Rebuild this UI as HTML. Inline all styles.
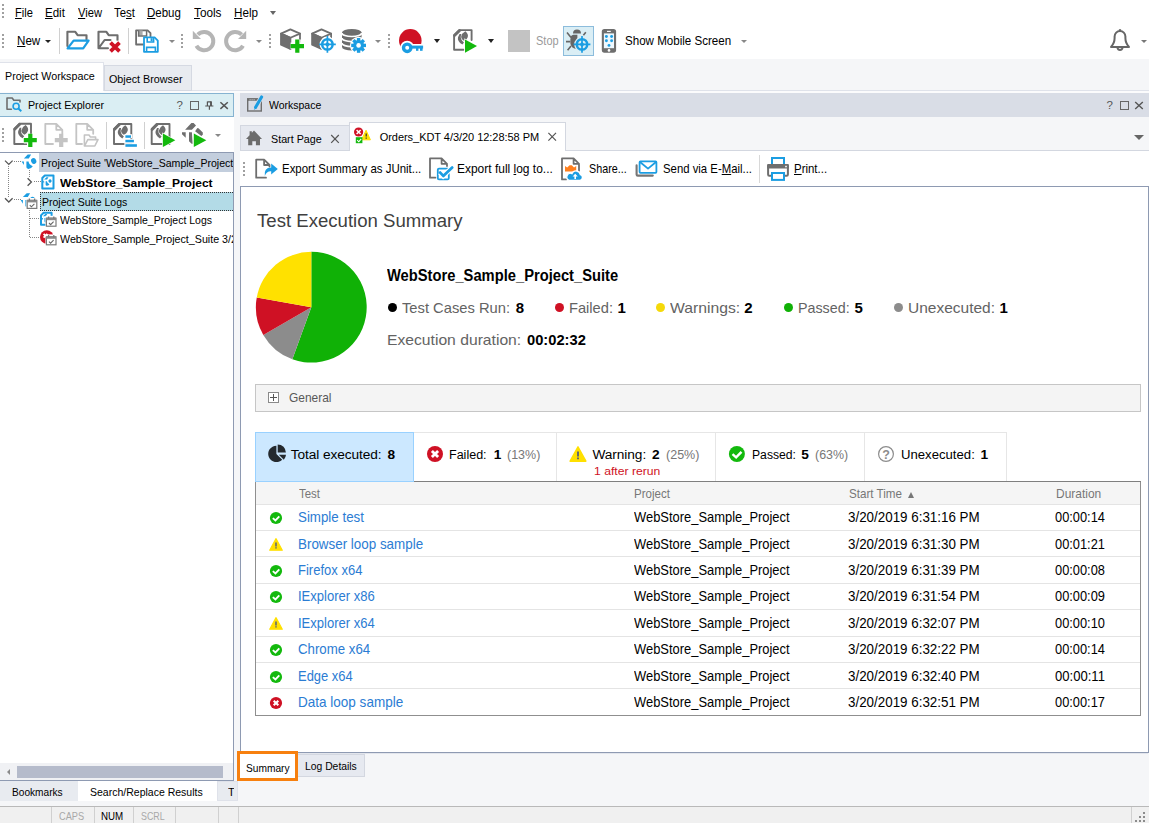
<!DOCTYPE html>
<html lang="en"><head><meta charset="utf-8"><title>TestComplete - Test Execution Summary</title>
<style>
html,body{margin:0;padding:0}
body{width:1149px;height:823px;position:relative;overflow:hidden;background:#f5f6f8;font-family:"Liberation Sans",sans-serif;color:#000}
.b{position:absolute}
.t{position:absolute;display:block;height:20px;line-height:20px;white-space:nowrap;font-family:"Liberation Sans",sans-serif}
svg{position:absolute;overflow:visible}
u{text-decoration:underline;text-underline-offset:1px}

</style></head>
<body>
<div class="b" style="left:0px;top:0px;width:1149px;height:59px;background:#fff;"></div>
<div class="b" style="left:0px;top:90px;width:1149px;height:1px;background:#dfe2ea;"></div>
<div class="b" style="left:0px;top:91px;width:1149px;height:2px;background:#fbfbfc;"></div>
<div class="b" style="left:2px;top:4px;width:2px;height:14px;background:repeating-linear-gradient(to bottom,#a0a0a0 0 2px,transparent 2px 4px)"></div>
<div class="b" style="left:2px;top:34px;width:2px;height:14px;background:repeating-linear-gradient(to bottom,#a0a0a0 0 2px,transparent 2px 4px)"></div>
<span class="t" style="left:14.8px;top:3.00px;font-size:12.7px;transform:scaleX(0.8745);transform-origin:0 0;"><u>F</u>ile</span>
<span class="t" style="left:44.9px;top:3.00px;font-size:12.7px;transform:scaleX(0.9097);transform-origin:0 0;"><u>E</u>dit</span>
<span class="t" style="left:77.5px;top:3.00px;font-size:12.7px;transform:scaleX(0.8797);transform-origin:0 0;"><u>V</u>iew</span>
<span class="t" style="left:114.0px;top:3.00px;font-size:12.7px;transform:scaleX(0.8977);transform-origin:0 0;">Te<u>s</u>t</span>
<span class="t" style="left:147.1px;top:3.00px;font-size:12.7px;transform:scaleX(0.9063);transform-origin:0 0;"><u>D</u>ebug</span>
<span class="t" style="left:194.3px;top:3.00px;font-size:12.7px;transform:scaleX(0.9283);transform-origin:0 0;"><u>T</u>ools</span>
<span class="t" style="left:234.3px;top:3.00px;font-size:12.7px;transform:scaleX(0.9192);transform-origin:0 0;"><u>H</u>elp</span>
<div class="b" style="left:269.5px;top:10.5px;width:0;height:0;border-left:3.5px solid transparent;border-right:3.5px solid transparent;border-top:4px solid #666"></div>
<span class="t" style="left:16.5px;top:31.00px;font-size:12.7px;transform:scaleX(0.9137);transform-origin:0 0;"><u>N</u>ew</span>
<div class="b" style="left:44.5px;top:40.0px;width:0;height:0;border-left:3.0px solid transparent;border-right:3.0px solid transparent;border-top:3px solid #222"></div>
<div class="b" style="left:59px;top:28px;width:1px;height:26px;background:#d0d0d0;"></div>
<div class="b" style="left:128px;top:28px;width:1px;height:26px;background:#d0d0d0;"></div>
<div class="b" style="left:168.5px;top:40.0px;width:0;height:0;border-left:3.0px solid transparent;border-right:3.0px solid transparent;border-top:3px solid #888"></div>
<div class="b" style="left:181px;top:34px;width:2px;height:14px;background:repeating-linear-gradient(to bottom,#a0a0a0 0 2px,transparent 2px 4px)"></div>
<div class="b" style="left:256.0px;top:40.0px;width:0;height:0;border-left:3.0px solid transparent;border-right:3.0px solid transparent;border-top:3px solid #888"></div>
<div class="b" style="left:269px;top:34px;width:2px;height:14px;background:repeating-linear-gradient(to bottom,#a0a0a0 0 2px,transparent 2px 4px)"></div>
<div class="b" style="left:374.5px;top:40.0px;width:0;height:0;border-left:3.0px solid transparent;border-right:3.0px solid transparent;border-top:3px solid #888"></div>
<div class="b" style="left:388px;top:34px;width:2px;height:14px;background:repeating-linear-gradient(to bottom,#a0a0a0 0 2px,transparent 2px 4px)"></div>
<div class="b" style="left:434.0px;top:39.0px;width:0;height:0;border-left:3.5px solid transparent;border-right:3.5px solid transparent;border-top:4px solid #222"></div>
<div class="b" style="left:488.0px;top:39.0px;width:0;height:0;border-left:3.5px solid transparent;border-right:3.5px solid transparent;border-top:4px solid #222"></div>
<div class="b" style="left:508px;top:30px;width:22px;height:22px;background:#c3c3c3;"></div>
<span class="t" style="left:535.6px;top:31.00px;font-size:12.7px;color:#9a9a9a;transform:scaleX(0.8656);transform-origin:0 0;">Stop</span>
<div class="b" style="left:563px;top:26px;width:31px;height:30px;background:#daeef5;border:1px solid #8cbcdc;box-sizing:border-box;"></div>
<span class="t" style="left:625.4px;top:31.00px;font-size:12.7px;transform:scaleX(0.9126);transform-origin:0 0;">Show Mobile Screen</span>
<div class="b" style="left:740.8px;top:40.0px;width:0;height:0;border-left:3.0px solid transparent;border-right:3.0px solid transparent;border-top:3px solid #888"></div>
<div class="b" style="left:1140.5px;top:40.0px;width:0;height:0;border-left:3.0px solid transparent;border-right:3.0px solid transparent;border-top:3px solid #777"></div>
<div class="b" style="left:104px;top:65px;width:88px;height:26px;background:#e8ebf0;border:1px solid #d5d9e2;box-sizing:border-box;"></div>
<div class="b" style="left:0px;top:62px;width:104px;height:30px;background:#fff;"></div>
<div class="b" style="left:0px;top:62px;width:104px;height:1px;background:#dfe2ea;"></div>
<div class="b" style="left:103px;top:62px;width:1px;height:29px;background:#dfe2ea;"></div>
<span class="t" style="left:5.2px;top:66.00px;font-size:11px;transform:scaleX(0.9738);transform-origin:0 0;">Project Workspace</span>
<span class="t" style="left:109.3px;top:69.00px;font-size:11px;transform:scaleX(0.9774);transform-origin:0 0;">Object Browser</span>
<div class="b" style="left:-1px;top:93px;width:235px;height:24px;background:#daeef3;border:1px solid #86b3d1;box-sizing:border-box;"></div>
<span class="t" style="left:27.9px;top:95.00px;font-size:11px;transform:scaleX(0.9711);transform-origin:0 0;">Project Explorer</span>
<span class="t" style="left:176.6px;top:95.00px;font-size:11.5px;color:#555;">?</span>
<div class="b" style="left:0px;top:117px;width:234px;height:36px;background:#fff;"></div>
<div class="b" style="left:0px;top:152px;width:234px;height:629px;background:#fff;border:1px solid #8e9ab2;box-sizing:border-box;border-left:none;"></div>
<div class="b" style="left:2px;top:128px;width:2px;height:14px;background:repeating-linear-gradient(to bottom,#a0a0a0 0 2px,transparent 2px 4px)"></div>
<div class="b" style="left:106px;top:122px;width:1px;height:27px;background:#d0d0d0;"></div>
<div class="b" style="left:144px;top:122px;width:1px;height:27px;background:#d0d0d0;"></div>
<div class="b" style="left:214.5px;top:134.0px;width:0;height:0;border-left:3.0px solid transparent;border-right:3.0px solid transparent;border-top:3px solid #888"></div>
<div class="b" style="left:39px;top:153px;width:194px;height:19px;background:#c3cedd;"></div>
<div class="b" style="left:40px;top:192px;width:193px;height:19px;background:#b3dbe7;border:1px dotted #333;box-sizing:border-box;border-left:1px dotted #333;border-right:none;"></div>
<div class="b" style="left:0;top:0;width:233px;height:260px;overflow:hidden">
<span class="t" style="left:40.7px;top:153.00px;font-size:11px;transform:scaleX(0.9615);transform-origin:0 0;">Project Suite 'WebStore_Sample_Project</span>
<span class="t" style="left:60.4px;top:173.00px;font-size:11px;font-weight:700;transform:scaleX(1.0916);transform-origin:0 0;">WebStore_Sample_Project</span>
<span class="t" style="left:41.7px;top:192.00px;font-size:11px;transform:scaleX(0.9554);transform-origin:0 0;">Project Suite Logs</span>
<span class="t" style="left:60.0px;top:210.00px;font-size:11px;transform:scaleX(0.9536);transform-origin:0 0;">WebStore_Sample_Project Logs</span>
<span class="t" style="left:60.0px;top:229.00px;font-size:11px;transform:scaleX(0.9724);transform-origin:0 0;">WebStore_Sample_Project_Suite 3/2</span>
</div>
<div class="b" style="left:0px;top:763px;width:233px;height:17px;background:#f0f1f4;"></div>
<div class="b" style="left:17px;top:766px;width:206px;height:12px;background:#b5bbcb;"></div>
<div class="b" style="left:7px;top:769px;width:0;height:0;border-top:3px solid transparent;border-bottom:3px solid transparent;border-right:3px solid #8a8a8a"></div>
<div class="b" style="left:0px;top:781px;width:78px;height:20px;background:#e8ebf0;"></div>
<div class="b" style="left:78px;top:781px;width:139px;height:20px;background:#fff;"></div>
<div class="b" style="left:217px;top:781px;width:21px;height:20px;background:#e8ebf0;border:1px solid #dfe2ea;box-sizing:border-box;"></div>
<span class="t" style="left:12.4px;top:782.00px;font-size:11px;transform:scaleX(0.9213);transform-origin:0 0;">Bookmarks</span>
<span class="t" style="left:89.6px;top:782.00px;font-size:11px;transform:scaleX(0.9550);transform-origin:0 0;">Search/Replace Results</span>
<span class="t" style="left:228.0px;top:782.00px;font-size:11px;width:6px;overflow:hidden;">T</span>
<div class="b" style="left:0px;top:806px;width:1149px;height:17px;background:#f0f0f0;"></div>
<div class="b" style="left:0px;top:806px;width:1149px;height:1px;background:#b9b9b9;"></div>
<div class="b" style="left:240px;top:753px;width:908px;height:1px;background:#e2e5ec;"></div>
<div class="b" style="left:51px;top:807px;width:1px;height:16px;background:#d0d0d0;"></div>
<div class="b" style="left:94px;top:807px;width:1px;height:16px;background:#d0d0d0;"></div>
<div class="b" style="left:133px;top:807px;width:1px;height:16px;background:#d0d0d0;"></div>
<div class="b" style="left:175px;top:807px;width:1px;height:16px;background:#d0d0d0;"></div>
<div class="b" style="left:218px;top:807px;width:1px;height:16px;background:#d0d0d0;"></div>
<div class="b" style="left:238px;top:807px;width:1px;height:16px;background:#d0d0d0;"></div>
<div class="b" style="left:1131px;top:807px;width:1px;height:16px;background:#d0d0d0;"></div>
<span class="t" style="left:58.7px;top:806.00px;font-size:10.5px;color:#a8a8a8;transform:scaleX(0.8778);transform-origin:0 0;">CAPS</span>
<span class="t" style="left:101.2px;top:806.00px;font-size:10.5px;transform:scaleX(0.9280);transform-origin:0 0;">NUM</span>
<span class="t" style="left:141.0px;top:806.00px;font-size:10.5px;color:#a8a8a8;transform:scaleX(0.8460);transform-origin:0 0;">SCRL</span>
<div class="b" style="left:1143px;top:812px;width:2px;height:2px;background:#8c8c8c;"></div>
<div class="b" style="left:1139px;top:816px;width:2px;height:2px;background:#8c8c8c;"></div>
<div class="b" style="left:1143px;top:816px;width:2px;height:2px;background:#8c8c8c;"></div>
<div class="b" style="left:1135px;top:820px;width:2px;height:2px;background:#8c8c8c;"></div>
<div class="b" style="left:1139px;top:820px;width:2px;height:2px;background:#8c8c8c;"></div>
<div class="b" style="left:1143px;top:820px;width:2px;height:2px;background:#8c8c8c;"></div>
<div class="b" style="left:240px;top:93px;width:909px;height:24px;background:#d9dde6;"></div>
<span class="t" style="left:268.6px;top:95.00px;font-size:11px;transform:scaleX(0.9539);transform-origin:0 0;">Workspace</span>
<span class="t" style="left:1106.6px;top:95.00px;font-size:11.5px;color:#555;">?</span>
<div class="b" style="left:240px;top:125px;width:110px;height:26px;background:#e6e9f0;border:1px solid #d3d7e0;box-sizing:border-box;"></div>
<div class="b" style="left:240px;top:150px;width:909px;height:1px;background:#d3d7e0;"></div>
<div class="b" style="left:349px;top:122px;width:217px;height:29px;background:#fff;border:1px solid #d3d7e0;box-sizing:border-box;border-bottom:none;"></div>
<span class="t" style="left:271.1px;top:129.00px;font-size:11px;transform:scaleX(0.9753);transform-origin:0 0;">Start Page</span>
<span class="t" style="left:379.7px;top:127.00px;font-size:11px;letter-spacing:-0.040px;">Orders_KDT 4/3/20 12:28:58 PM</span>
<div class="b" style="left:1134.0px;top:135.0px;width:0;height:0;border-left:5.0px solid transparent;border-right:5.0px solid transparent;border-top:5px solid #666"></div>
<div class="b" style="left:240px;top:151px;width:909px;height:35px;background:#fff;"></div>
<div class="b" style="left:243px;top:162px;width:2px;height:14px;background:repeating-linear-gradient(to bottom,#a0a0a0 0 2px,transparent 2px 4px)"></div>
<span class="t" style="left:282.2px;top:159.00px;font-size:12.7px;transform:scaleX(0.9022);transform-origin:0 0;">Export Summary as JUnit...</span>
<span class="t" style="left:457.4px;top:159.00px;font-size:12.7px;transform:scaleX(0.9433);transform-origin:0 0;">Export full <u>l</u>og to...</span>
<span class="t" style="left:588.8px;top:159.00px;font-size:12.7px;transform:scaleX(0.8484);transform-origin:0 0;">Share...</span>
<span class="t" style="left:662.7px;top:159.00px;font-size:12.7px;transform:scaleX(0.8949);transform-origin:0 0;">Send via E-<u>M</u>ail...</span>
<div class="b" style="left:759px;top:155px;width:1px;height:28px;background:#d8d8d8;"></div>
<span class="t" style="left:794.3px;top:159.00px;font-size:12.7px;transform:scaleX(0.9026);transform-origin:0 0;"><u>P</u>rint...</span>
<div class="b" style="left:240px;top:186px;width:909px;height:567px;background:#fff;border:1px solid #8e9ab2;box-sizing:border-box;"></div>
<span class="t" style="left:256.7px;top:211.00px;font-size:18.3px;color:#404040;transform:scaleX(1.0169);transform-origin:0 0;">Test Execution Summary</span>
<svg style="left:255px;top:251px" width="113" height="113" viewBox="255 251 113 113">
<path d="M311.3 307.2 L311.3 251.8 A55.4 55.4 0 1 1 292.35 359.26 Z" fill="#10b106"/>
<path d="M311.3 307.2 L292.35 359.26 A55.4 55.4 0 0 1 263.32 334.9 Z" fill="#8c8c8c"/>
<path d="M311.3 307.2 L263.32 334.9 A55.4 55.4 0 0 1 256.74 297.58 Z" fill="#cf1124"/>
<path d="M311.3 307.2 L256.74 297.58 A55.4 55.4 0 0 1 311.3 251.8 Z" fill="#ffe100"/>
</svg>
<span class="t" style="left:387.0px;top:266.00px;font-size:15.6px;font-weight:700;transform:scaleX(0.9437);transform-origin:0 0;">WebStore_Sample_Project_Suite</span>
<div class="b" style="left:388.0px;top:302.9px;width:9px;height:9px;border-radius:50%;background:#000"></div>
<span class="t" style="left:402.3px;top:298.00px;font-size:15px;color:#636363;transform:scaleX(0.9823);transform-origin:0 0;">Test Cases Run:</span>
<span class="t" style="left:515.7px;top:298.00px;font-size:15px;font-weight:700;">8</span>
<div class="b" style="left:555.2px;top:302.9px;width:9px;height:9px;border-radius:50%;background:#cf1124"></div>
<span class="t" style="left:569.4px;top:298.00px;font-size:15px;color:#636363;transform:scaleX(0.9771);transform-origin:0 0;">Failed:</span>
<span class="t" style="left:617.6px;top:298.00px;font-size:15px;font-weight:700;">1</span>
<div class="b" style="left:655.7px;top:302.9px;width:9px;height:9px;border-radius:50%;background:#f5d90a"></div>
<span class="t" style="left:669.8px;top:298.00px;font-size:15px;color:#636363;transform:scaleX(1.0483);transform-origin:0 0;">Warnings:</span>
<span class="t" style="left:744.2px;top:298.00px;font-size:15px;font-weight:700;">2</span>
<div class="b" style="left:784.2px;top:302.9px;width:9px;height:9px;border-radius:50%;background:#10b106"></div>
<span class="t" style="left:798.4px;top:298.00px;font-size:15px;color:#636363;transform:scaleX(0.9520);transform-origin:0 0;">Passed:</span>
<span class="t" style="left:854.4px;top:298.00px;font-size:15px;font-weight:700;">5</span>
<div class="b" style="left:893.8px;top:302.9px;width:9px;height:9px;border-radius:50%;background:#8c8c8c"></div>
<span class="t" style="left:908.0px;top:298.00px;font-size:15px;color:#636363;transform:scaleX(1.0328);transform-origin:0 0;">Unexecuted:</span>
<span class="t" style="left:999.6px;top:298.00px;font-size:15px;font-weight:700;">1</span>
<span class="t" style="left:387.3px;top:330.00px;font-size:15px;color:#636363;transform:scaleX(1.0450);transform-origin:0 0;">Execution duration:</span>
<span class="t" style="left:526.8px;top:330.00px;font-size:15px;font-weight:700;transform:scaleX(0.9792);transform-origin:0 0;">00:02:32</span>
<div class="b" style="left:255px;top:384px;width:886px;height:28px;background:#f4f4f4;border:1px solid #c6c6c6;box-sizing:border-box;"></div>
<div class="b" style="left:268px;top:392px;width:11px;height:11px;background:#fff;border:1px solid #8a8a8a;box-sizing:border-box;"></div>
<div class="b" style="left:270px;top:397px;width:7px;height:1px;background:#555;"></div>
<div class="b" style="left:273px;top:394px;width:1px;height:7px;background:#555;"></div>
<span class="t" style="left:288.5px;top:388.00px;font-size:13.3px;color:#585858;transform:scaleX(0.8983);transform-origin:0 0;">General</span>
<div class="b" style="left:255px;top:432px;width:752px;height:1px;background:#e6e6e6;"></div>
<div class="b" style="left:556px;top:433px;width:1px;height:49px;background:#e6e6e6;"></div>
<div class="b" style="left:715px;top:433px;width:1px;height:49px;background:#e6e6e6;"></div>
<div class="b" style="left:864px;top:433px;width:1px;height:49px;background:#e6e6e6;"></div>
<div class="b" style="left:1006px;top:433px;width:1px;height:49px;background:#e6e6e6;"></div>
<div class="b" style="left:255px;top:481px;width:886px;height:1px;background:#7f7f7f;"></div>
<div class="b" style="left:255px;top:432px;width:159px;height:50px;background:#cce8ff;border:1px solid #99d1ff;box-sizing:border-box;"></div>
<span class="t" style="left:290.7px;top:445.00px;font-size:13.7px;letter-spacing:-0.084px;">Total executed:</span>
<span class="t" style="left:387.5px;top:445.00px;font-size:13.7px;font-weight:700;">8</span>
<span class="t" style="left:449.0px;top:445.00px;font-size:13.7px;transform:scaleX(0.9150);transform-origin:0 0;">Failed:</span>
<span class="t" style="left:493.8px;top:445.00px;font-size:13.7px;font-weight:700;">1</span>
<span class="t" style="left:506.7px;top:445.00px;font-size:13.7px;color:#777;transform:scaleX(0.9119);transform-origin:0 0;">(13%)</span>
<span class="t" style="left:592.5px;top:445.00px;font-size:13.7px;letter-spacing:-0.081px;">Warning:</span>
<span class="t" style="left:652.0px;top:445.00px;font-size:13.7px;font-weight:700;">2</span>
<span class="t" style="left:665.7px;top:445.00px;font-size:13.7px;color:#777;transform:scaleX(0.9147);transform-origin:0 0;">(25%)</span>
<span class="t" style="left:593.6px;top:461.00px;font-size:11.6px;color:#cf1124;transform:scaleX(1.0498);transform-origin:0 0;">1 after rerun</span>
<span class="t" style="left:751.5px;top:445.00px;font-size:13.7px;transform:scaleX(0.8895);transform-origin:0 0;">Passed:</span>
<span class="t" style="left:801.3px;top:445.00px;font-size:13.7px;font-weight:700;">5</span>
<span class="t" style="left:815.0px;top:445.00px;font-size:13.7px;color:#777;transform:scaleX(0.9092);transform-origin:0 0;">(63%)</span>
<span class="t" style="left:900.6px;top:445.00px;font-size:13.7px;transform:scaleX(0.9602);transform-origin:0 0;">Unexecuted:</span>
<span class="t" style="left:980.6px;top:445.00px;font-size:13.7px;font-weight:700;">1</span>
<div class="b" style="left:255px;top:482px;width:886px;height:234px;background:#fff;border:1px solid #8f8f8f;box-sizing:border-box;border-top:none;"></div>
<div class="b" style="left:256px;top:482px;width:884px;height:22px;background:#f5f5f5;"></div>
<span class="t" style="left:299.0px;top:484.00px;font-size:12.6px;color:#777;transform:scaleX(0.9087);transform-origin:0 0;">Test</span>
<span class="t" style="left:634.1px;top:484.00px;font-size:12.6px;color:#777;transform:scaleX(0.9157);transform-origin:0 0;">Project</span>
<span class="t" style="left:848.9px;top:484.00px;font-size:12.6px;color:#777;transform:scaleX(0.9235);transform-origin:0 0;">Start Time</span>
<div class="b" style="left:908px;top:491.5px;width:0;height:0;border-left:3.7px solid transparent;border-right:3.7px solid transparent;border-bottom:6px solid #777"></div>
<span class="t" style="left:1055.7px;top:484.00px;font-size:12.6px;color:#777;transform:scaleX(0.9494);transform-origin:0 0;">Duration</span>
<div class="b" style="left:256px;top:504px;width:884px;height:1px;background:#e4e4e4;"></div>
<span class="t" style="left:298.3px;top:507.00px;font-size:14.3px;color:#2b7cd3;transform:scaleX(0.9319);transform-origin:0 0;">Simple test</span>
<span class="t" style="left:634.1px;top:507.00px;font-size:14.3px;transform:scaleX(0.9037);transform-origin:0 0;">WebStore_Sample_Project</span>
<span class="t" style="left:848.2px;top:507.00px;font-size:14.3px;transform:scaleX(0.9360);transform-origin:0 0;">3/20/2019 6:31:16 PM</span>
<span class="t" style="left:1055.0px;top:507.00px;font-size:14.3px;transform:scaleX(0.8966);transform-origin:0 0;">00:00:14</span>
<!--icon p 0-->
<div class="b" style="left:256px;top:530px;width:884px;height:1px;background:#e4e4e4;"></div>
<span class="t" style="left:298.3px;top:534.00px;font-size:14.3px;color:#2b7cd3;transform:scaleX(0.9371);transform-origin:0 0;">Browser loop sample</span>
<span class="t" style="left:634.1px;top:534.00px;font-size:14.3px;transform:scaleX(0.9037);transform-origin:0 0;">WebStore_Sample_Project</span>
<span class="t" style="left:848.2px;top:534.00px;font-size:14.3px;transform:scaleX(0.9360);transform-origin:0 0;">3/20/2019 6:31:30 PM</span>
<span class="t" style="left:1055.0px;top:534.00px;font-size:14.3px;transform:scaleX(0.8966);transform-origin:0 0;">00:01:21</span>
<!--icon w 1-->
<div class="b" style="left:256px;top:556px;width:884px;height:1px;background:#e4e4e4;"></div>
<span class="t" style="left:298.3px;top:560.00px;font-size:14.3px;color:#2b7cd3;transform:scaleX(0.9106);transform-origin:0 0;">Firefox x64</span>
<span class="t" style="left:634.1px;top:560.00px;font-size:14.3px;transform:scaleX(0.9037);transform-origin:0 0;">WebStore_Sample_Project</span>
<span class="t" style="left:848.2px;top:560.00px;font-size:14.3px;transform:scaleX(0.9360);transform-origin:0 0;">3/20/2019 6:31:39 PM</span>
<span class="t" style="left:1055.0px;top:560.00px;font-size:14.3px;transform:scaleX(0.8966);transform-origin:0 0;">00:00:08</span>
<!--icon p 2-->
<div class="b" style="left:256px;top:583px;width:884px;height:1px;background:#e4e4e4;"></div>
<span class="t" style="left:298.3px;top:586.00px;font-size:14.3px;color:#2b7cd3;transform:scaleX(0.9117);transform-origin:0 0;">IExplorer x86</span>
<span class="t" style="left:634.1px;top:586.00px;font-size:14.3px;transform:scaleX(0.9037);transform-origin:0 0;">WebStore_Sample_Project</span>
<span class="t" style="left:848.2px;top:586.00px;font-size:14.3px;transform:scaleX(0.9360);transform-origin:0 0;">3/20/2019 6:31:54 PM</span>
<span class="t" style="left:1055.0px;top:586.00px;font-size:14.3px;transform:scaleX(0.8966);transform-origin:0 0;">00:00:09</span>
<!--icon p 3-->
<div class="b" style="left:256px;top:609px;width:884px;height:1px;background:#e4e4e4;"></div>
<span class="t" style="left:298.3px;top:613.00px;font-size:14.3px;color:#2b7cd3;transform:scaleX(0.9117);transform-origin:0 0;">IExplorer x64</span>
<span class="t" style="left:634.1px;top:613.00px;font-size:14.3px;transform:scaleX(0.9037);transform-origin:0 0;">WebStore_Sample_Project</span>
<span class="t" style="left:848.2px;top:613.00px;font-size:14.3px;transform:scaleX(0.9360);transform-origin:0 0;">3/20/2019 6:32:07 PM</span>
<span class="t" style="left:1055.0px;top:613.00px;font-size:14.3px;transform:scaleX(0.8966);transform-origin:0 0;">00:00:10</span>
<!--icon w 4-->
<div class="b" style="left:256px;top:636px;width:884px;height:1px;background:#e4e4e4;"></div>
<span class="t" style="left:298.3px;top:639.00px;font-size:14.3px;color:#2b7cd3;transform:scaleX(0.9271);transform-origin:0 0;">Chrome x64</span>
<span class="t" style="left:634.1px;top:639.00px;font-size:14.3px;transform:scaleX(0.9037);transform-origin:0 0;">WebStore_Sample_Project</span>
<span class="t" style="left:848.2px;top:639.00px;font-size:14.3px;transform:scaleX(0.9360);transform-origin:0 0;">3/20/2019 6:32:22 PM</span>
<span class="t" style="left:1055.0px;top:639.00px;font-size:14.3px;transform:scaleX(0.8966);transform-origin:0 0;">00:00:14</span>
<!--icon p 5-->
<div class="b" style="left:256px;top:662px;width:884px;height:1px;background:#e4e4e4;"></div>
<span class="t" style="left:298.3px;top:666.00px;font-size:14.3px;color:#2b7cd3;transform:scaleX(0.9053);transform-origin:0 0;">Edge x64</span>
<span class="t" style="left:634.1px;top:666.00px;font-size:14.3px;transform:scaleX(0.9037);transform-origin:0 0;">WebStore_Sample_Project</span>
<span class="t" style="left:848.2px;top:666.00px;font-size:14.3px;transform:scaleX(0.9360);transform-origin:0 0;">3/20/2019 6:32:40 PM</span>
<span class="t" style="left:1055.0px;top:666.00px;font-size:14.3px;transform:scaleX(0.9140);transform-origin:0 0;">00:00:11</span>
<!--icon p 6-->
<div class="b" style="left:256px;top:688px;width:884px;height:1px;background:#e4e4e4;"></div>
<span class="t" style="left:298.3px;top:692.00px;font-size:14.3px;color:#2b7cd3;transform:scaleX(0.9455);transform-origin:0 0;">Data loop sample</span>
<span class="t" style="left:634.1px;top:692.00px;font-size:14.3px;transform:scaleX(0.9037);transform-origin:0 0;">WebStore_Sample_Project</span>
<span class="t" style="left:848.2px;top:692.00px;font-size:14.3px;transform:scaleX(0.9360);transform-origin:0 0;">3/20/2019 6:32:51 PM</span>
<span class="t" style="left:1055.0px;top:692.00px;font-size:14.3px;transform:scaleX(0.8966);transform-origin:0 0;">00:00:17</span>
<!--icon f 7-->
<div class="b" style="left:297px;top:754px;width:68px;height:23px;background:#e6e9f0;border:1px solid #d3d7e0;box-sizing:border-box;"></div>
<div class="b" style="left:237px;top:751px;width:61px;height:30px;background:#fff;border:3px solid #f7800f;box-sizing:border-box;"></div>
<span class="t" style="left:246.4px;top:758.00px;font-size:11px;transform:scaleX(0.9264);transform-origin:0 0;">Summary</span>
<span class="t" style="left:304.5px;top:756.00px;font-size:11px;transform:scaleX(0.9410);transform-origin:0 0;">Log Details</span>
<svg style="left:0;top:0" width="1149" height="823" viewBox="0 0 1149 823">
<path d="M67.4 46 V31.8 H75.3 L77.6 35.2 H86.5 V39.5" fill="none" stroke="#6e6e6e" stroke-width="2.1" stroke-linejoin="round" stroke-linecap="round"/>
<path d="M73.6 40.6 H88.6 L83.2 48.4 H67.6 Z" fill="#fff" stroke="#1b9de2" stroke-width="2.2" stroke-linejoin="round" stroke-linecap="round"/>
<path d="M98.5 48 V31.8 H106.4 L108.7 35.2 H117.5 V40 M98.8 48 L104.6 40 H110.5 M98.5 48.2 H108" fill="none" stroke="#6e6e6e" stroke-width="2.1" stroke-linejoin="round" stroke-linecap="round"/>
<path d="M110.5 42.7 L119.5 51.3 M119.5 42.7 L110.5 51.3" fill="none" stroke="#fff" stroke-width="6" />
<path d="M110.5 42.7 L119.5 51.3 M119.5 42.7 L110.5 51.3" fill="none" stroke="#cf1124" stroke-width="3.8" />
<path d="M136.1 44.5 V30.3 H147.6 L150.5 33.2 V36.5 M136.1 44.5 H143" fill="none" stroke="#6e6e6e" stroke-width="1.8" stroke-linejoin="round" stroke-linecap="round"/>
<rect x="138.6" y="30.4" width="4" height="5.2" fill="#a9a9a9"/>
<path d="M138.6 30.5 V36 H146.6 V30.5" fill="none" stroke="#6e6e6e" stroke-width="1.5" />
<path d="M144 37.4 H154.6 L157.8 40.6 V51.8 H144 Z" fill="#fff" stroke="#1b9de2" stroke-width="1.8" stroke-linejoin="round" stroke-linecap="round"/>
<path d="M147.2 37.4 V42 H153.6 V37.4 M146.6 51.8 V47.4 H155.4 V51.8" fill="none" stroke="#1b9de2" stroke-width="1.6" />
<rect x="150.6" y="38.2" width="2" height="3" fill="#1b9de2"/>
<path d="M197.8 34.7 A9.1 9.1 0 1 1 196.4 45.8" fill="none" stroke="#b5b5b5" stroke-width="4" />
<path d="M192.8 30.8 V39 H201 Z" fill="#b5b5b5" />
<path d="M241.6 34.7 A9.1 9.1 0 1 0 243 45.8" fill="none" stroke="#b5b5b5" stroke-width="4" />
<path d="M246.2 30.8 V39 H238 Z" fill="#b5b5b5" />
<path d="M281.0 33.6 L290.4 29.4 L300.0 33.6 L290.4 37.8 Z" fill="#fff" stroke="#6e6e6e" stroke-width="1.8" stroke-linejoin="round" stroke-linecap="round"/>
<path d="M281.0 33.6 L290.4 37.8 L290.4 49 L281.0 44.8 Z" fill="#6e6e6e" stroke="#6e6e6e" stroke-width="1.8" stroke-linejoin="round" stroke-linecap="round"/>
<path d="M300.0 33.6 V44.8 L290.4 49" fill="none" stroke="#6e6e6e" stroke-width="1.8" stroke-linejoin="round" stroke-linecap="round"/>
<path d="M290.6 46.1 H304 M297.3 39.6 V52.8" fill="none" stroke="#fff" stroke-width="7" />
<path d="M290.6 46.1 H304 M297.3 39.6 V52.8" fill="none" stroke="#13b90d" stroke-width="4.2" />
<path d="M312.1 33.6 L321.5 29.4 L331.1 33.6 L321.5 37.8 Z" fill="#fff" stroke="#6e6e6e" stroke-width="1.8" stroke-linejoin="round" stroke-linecap="round"/>
<path d="M312.1 33.6 L321.5 37.8 L321.5 49 L312.1 44.8 Z" fill="#6e6e6e" stroke="#6e6e6e" stroke-width="1.8" stroke-linejoin="round" stroke-linecap="round"/>
<path d="M331.1 33.6 V44.8 L321.5 49" fill="none" stroke="#6e6e6e" stroke-width="1.8" stroke-linejoin="round" stroke-linecap="round"/>
<circle cx="327.4" cy="44.4" r="7.8" fill="#fff"/>
<circle cx="327.4" cy="44.4" r="5.2" fill="none" stroke="#1b9de2" stroke-width="2.5"/>
<path d="M327.4 36.0 V52.8 M319.0 44.4 H335.79999999999995" fill="none" stroke="#1b9de2" stroke-width="1.7" />
<path d="M327.4 41.8 L330.0 44.4 L327.4 47.0 L324.79999999999995 44.4 Z" fill="#1b9de2" />
<path d="M342 32.6 V47 A9.8 3.6 0 0 0 361.6 47 V32.6 Z" fill="#6e6e6e" />
<ellipse cx="351.8" cy="32.6" rx="9.8" ry="3.6" fill="#6e6e6e"/>
<path d="M342 32.9 A9.8 3.6 0 0 0 361.6 32.9" fill="none" stroke="#fff" stroke-width="1.7" />
<path d="M342 38 A9.8 3.6 0 0 0 361.6 38" fill="none" stroke="#fff" stroke-width="1.7" />
<path d="M342 43.1 A9.8 3.6 0 0 0 361.6 43.1" fill="none" stroke="#fff" stroke-width="1.7" />
<circle cx="358.6" cy="45.4" r="8.6" fill="#fff"/>
<rect x="356.90000000000003" y="38.0" width="3.4" height="4" fill="#1b9de2" transform="rotate(0 358.6 45.4)"/>
<rect x="356.90000000000003" y="38.0" width="3.4" height="4" fill="#1b9de2" transform="rotate(45 358.6 45.4)"/>
<rect x="356.90000000000003" y="38.0" width="3.4" height="4" fill="#1b9de2" transform="rotate(90 358.6 45.4)"/>
<rect x="356.90000000000003" y="38.0" width="3.4" height="4" fill="#1b9de2" transform="rotate(135 358.6 45.4)"/>
<rect x="356.90000000000003" y="38.0" width="3.4" height="4" fill="#1b9de2" transform="rotate(180 358.6 45.4)"/>
<rect x="356.90000000000003" y="38.0" width="3.4" height="4" fill="#1b9de2" transform="rotate(225 358.6 45.4)"/>
<rect x="356.90000000000003" y="38.0" width="3.4" height="4" fill="#1b9de2" transform="rotate(270 358.6 45.4)"/>
<rect x="356.90000000000003" y="38.0" width="3.4" height="4" fill="#1b9de2" transform="rotate(315 358.6 45.4)"/>
<circle cx="358.6" cy="45.4" r="5.4" fill="#1b9de2"/>
<circle cx="358.6" cy="45.4" r="2.3" fill="#fff"/>
<circle cx="410.3" cy="40.4" r="11.3" fill="#cf1124"/>
<circle cx="407.2" cy="47.8" r="7" fill="#fff"/>
<rect x="410" y="44" width="14.2" height="8.4" fill="#fff"/>
<circle cx="407.2" cy="47.8" r="3.7" fill="none" stroke="#1b9de2" stroke-width="3.4"/>
<rect x="411.5" y="45.6" width="11.6" height="3" fill="#1b9de2"/>
<rect x="416" y="48" width="2.4" height="2.8" fill="#1b9de2"/>
<rect x="420" y="48" width="2.6" height="2.8" fill="#1b9de2"/>
<path d="M459.2 30.1 H471.6 V40 M459.2 30.1 L454.1 35.2 V49.7 H463.5" fill="none" stroke="#6e6e6e" stroke-width="1.9" stroke-linejoin="round" stroke-linecap="round"/>
<path d="M454.5 35.6 L459.6 30.5" fill="none" stroke="#6e6e6e" stroke-width="2.8" stroke-linecap="round"/>
<path d="M465.4 31.3 Q468.8 34.2 467.7 37.2 Q466.59999999999997 40.2 464.3 41.1 Q461.0 39.2 461.2 36.5 Q461.8 33.2 465.4 31.3 Z M459.5 34.1 L461.2 34.1 Q459.59999999999997 39.8 464.0 42.5 L462.4 44.6 Q457.0 41.2 458.0 37.2 Z" fill="#6e6e6e" />
<path d="M465 39.4 V52.8 L477 46.1 Z" fill="#13b90d" stroke="#fff" stroke-width="1.4" />
<path d="M465 39.4 V52.8 L477 46.1 Z" fill="#13b90d" />
<path d="M573 33.6 a4 4 0 0 1 8 0 z" fill="#666" />
<path d="M577.4 34.8 h-4 q-3 0.4 -3 4.4 v4 q0 5 7 5.8 z" fill="#666" />
<path d="M571 37.4 L567 32.6 M570.4 41.6 H566 M571 46 L567.6 50.2 M583.4 35.2 L585.8 32.2" fill="none" stroke="#666" stroke-width="1.6" />
<circle cx="582" cy="44.4" r="7.8" fill="#daeef5"/>
<circle cx="582" cy="44.4" r="5.2" fill="none" stroke="#1b9de2" stroke-width="2.5"/>
<path d="M582 36.0 V52.8 M573.6 44.4 H590.4" fill="none" stroke="#1b9de2" stroke-width="1.7" />
<path d="M582 41.8 L584.6 44.4 L582 47.0 L579.4 44.4 Z" fill="#1b9de2" />
<rect x="601.8" y="29" width="14.3" height="23.7" fill="#6e6e6e" rx="2.6"/>
<rect x="603.9" y="33.4" width="10.1" height="14.8" fill="#eef8fe"/>
<circle cx="606.4" cy="36.5" r="1.45" fill="#1b9de2"/>
<circle cx="611.6" cy="36.5" r="1.45" fill="#1b9de2"/>
<circle cx="606.4" cy="40.8" r="1.45" fill="#1b9de2"/>
<circle cx="611.6" cy="40.8" r="1.45" fill="#1b9de2"/>
<circle cx="609" cy="45.4" r="1.45" fill="#1b9de2"/>
<path d="M607 31.4 H610.8" fill="none" stroke="#fff" stroke-width="1.1" />
<circle cx="609" cy="50.4" r="1.3" fill="#fff"/>
<path d="M1111 46.9 H1129 M1111.2 46.6 Q1114.6 43 1114.6 38 V36.6 A5.4 5.6 0 0 1 1125.4 36.6 V38 Q1125.4 43 1128.8 46.6" fill="none" stroke="#666" stroke-width="2" stroke-linejoin="round" stroke-linecap="round"/>
<path d="M1120 29.2 V31" fill="none" stroke="#666" stroke-width="2.2" />
<path d="M1117.4 47.8 A2.7 3 0 0 0 1122.6 47.8" fill="none" stroke="#666" stroke-width="1.9" />
<path d="M7 109.2 V98 H12.2 L13.8 100.2 H20 V102 M7 109.2 H11.4" fill="none" stroke="#6e6e6e" stroke-width="1.6" stroke-linejoin="round" stroke-linecap="round"/>
<circle cx="16.1" cy="106.2" r="3" fill="#daeef3" stroke="#1b9de2" stroke-width="1.6"/>
<path d="M18.4 108.5 L21.3 111.3" fill="none" stroke="#1b9de2" stroke-width="1.9" />
<rect x="190.5" y="101.5" width="8" height="8" fill="none" stroke="#666" stroke-width="1"/>
<path d="M205.2 106 H213.4 M207.4 101.6 V106 M207.4 101.8 H211.4 M209.4 106 V109.8" fill="none" stroke="#555" stroke-width="1.2" />
<path d="M211 101.4 V106" fill="none" stroke="#555" stroke-width="1.9" />
<path d="M220.4 102.2 L227.8 108.9 M227.8 102.2 L220.4 108.9" fill="none" stroke="#555" stroke-width="1.5" />
<path d="M14.3 128.8 L19.3 123.8 H31 V144 H14.3 Z" fill="none" stroke="#6e6e6e" stroke-width="1.9" stroke-linejoin="round" stroke-linecap="round"/>
<path d="M14.700000000000001 129.20000000000002 L19.7 124.2" fill="none" stroke="#6e6e6e" stroke-width="2.8" stroke-linecap="round"/>
<path d="M25.6 125.0 Q29.0 127.9 27.9 130.9 Q26.8 133.9 24.5 134.8 Q21.2 132.9 21.4 130.20000000000002 Q22.0 126.9 25.6 125.0 Z M19.7 127.80000000000001 L21.4 127.80000000000001 Q19.8 133.5 24.200000000000003 136.20000000000002 L22.6 138.3 Q17.2 134.9 18.2 130.9 Z" fill="#6e6e6e" />
<path d="M23.8 140.2 H36.8 M30.3 133.8 V147" fill="none" stroke="#fff" stroke-width="6.6" />
<path d="M23.8 140.2 H36.8 M30.3 133.8 V147" fill="none" stroke="#13b90d" stroke-width="4.2" />
<path d="M53 144 H45.3 V123.8 H56.3 L62.3 129.8 V133.8 M56.3 123.8 V129.8 H62.3" fill="none" stroke="#c4c4c4" stroke-width="1.8" stroke-linejoin="round" stroke-linecap="round"/>
<path d="M54.8 140.2 H67.7 M61.2 133.8 V147" fill="none" stroke="#c4c4c4" stroke-width="4.2" />
<path d="M82 144 H76.3 V123.8 H87.2 L93.2 129.8 V133.8 M87.2 123.8 V129.8 H93.2" fill="none" stroke="#c4c4c4" stroke-width="1.8" stroke-linejoin="round" stroke-linecap="round"/>
<path d="M84.4 146 V135 H89 L90.4 137 H95.6 V139 M84.6 146 L87.8 139.6 H98 L94.8 146 Z" fill="#fff" stroke="#c4c4c4" stroke-width="1.6" stroke-linejoin="round" stroke-linecap="round"/>
<path d="M114 129 L119 124 H131.3 V144 H114 Z" fill="none" stroke="#6e6e6e" stroke-width="1.9" stroke-linejoin="round" stroke-linecap="round"/>
<path d="M114.4 129.4 L119.4 124.4" fill="none" stroke="#6e6e6e" stroke-width="2.8" stroke-linecap="round"/>
<path d="M125.3 125.19999999999999 Q128.7 128.1 127.6 131.1 Q126.5 134.1 124.19999999999999 135.0 Q120.89999999999999 133.1 121.1 130.4 Q121.69999999999999 127.1 125.3 125.19999999999999 Z M119.39999999999999 128.0 L121.1 128.0 Q119.5 133.7 123.89999999999999 136.4 L122.3 138.5 Q116.89999999999999 135.1 117.89999999999999 131.1 Z" fill="#6e6e6e" />
<rect x="124.4" y="134.2" width="7.6" height="4" fill="#fff"/>
<rect x="124.4" y="138.8" width="10.5" height="4.6" fill="#fff"/>
<rect x="124.4" y="143.2" width="13.5" height="4.6" fill="#fff"/>
<rect x="125.4" y="135.3" width="5.6" height="2.5" fill="#1b9de2"/>
<rect x="125.4" y="139.8" width="8.5" height="2.5" fill="#1b9de2"/>
<rect x="125.4" y="144.2" width="11.5" height="2.6" fill="#1b9de2"/>
<path d="M151.7 129 L156.7 124 H169.5 V144 H151.7 Z" fill="none" stroke="#6e6e6e" stroke-width="1.9" stroke-linejoin="round" stroke-linecap="round"/>
<path d="M152.1 129.4 L157.1 124.4" fill="none" stroke="#6e6e6e" stroke-width="2.8" stroke-linecap="round"/>
<path d="M163.0 125.19999999999999 Q166.4 128.1 165.3 131.1 Q164.20000000000002 134.1 161.9 135.0 Q158.60000000000002 133.1 158.8 130.4 Q159.4 127.1 163.0 125.19999999999999 Z M157.10000000000002 128.0 L158.8 128.0 Q157.20000000000002 133.7 161.60000000000002 136.4 L160.0 138.5 Q154.60000000000002 135.1 155.60000000000002 131.1 Z" fill="#6e6e6e" />
<path d="M162.9 133.6 V147.1 L175.3 140.3 Z" fill="#13b90d" stroke="#fff" stroke-width="1.4" />
<path d="M162.9 133.6 V147.1 L175.3 140.3 Z" fill="#13b90d" />
<path d="M185.1 129.7 L191.4 123.1 H193.6 L196 125.39999999999999 L191.9 129.7 Z M182 132.2 H185.7 V137.79999999999998 L182 134.29999999999998 Z M189 132.2 H191.9 L192.6 143.7 H191.6 L189 141.29999999999998 Z M195.1 131.2 L197.2 128.29999999999998 Q198 127.69999999999999 199 128.7 L202.8 132.4 V134.7 L201.3 135.9 Z" fill="#6e6e6e" />
<path d="M193.8 133.6 V147.1 L206.3 140.3 Z" fill="#13b90d" stroke="#fff" stroke-width="1.4" />
<path d="M193.8 133.6 V147.1 L206.3 140.3 Z" fill="#13b90d" />
<path d="M5 160.6 L8.8 164.4 L12.6 160.6" fill="none" stroke="#555" stroke-width="1.3" />
<path d="M5 198.2 L8.8 202 L12.6 198.2" fill="none" stroke="#555" stroke-width="1.3" />
<path d="M27.6 178.2 L31.4 182 L27.6 185.8" fill="none" stroke="#555" stroke-width="1.3" />
<path d="M8.5 166 V198" fill="none" stroke="#858585" stroke-width="1" stroke-dasharray="1 1"/>
<path d="M14 161.5 H22" fill="none" stroke="#858585" stroke-width="1" stroke-dasharray="1 1"/>
<path d="M14 199.5 H22" fill="none" stroke="#858585" stroke-width="1" stroke-dasharray="1 1"/>
<path d="M29.5 170 V177" fill="none" stroke="#858585" stroke-width="1" stroke-dasharray="1 1"/>
<path d="M34 181.5 H41" fill="none" stroke="#858585" stroke-width="1" stroke-dasharray="1 1"/>
<path d="M29.5 210 V238" fill="none" stroke="#858585" stroke-width="1" stroke-dasharray="1 1"/>
<path d="M30 218.5 H40" fill="none" stroke="#858585" stroke-width="1" stroke-dasharray="1 1"/>
<path d="M30 237.5 H40" fill="none" stroke="#858585" stroke-width="1" stroke-dasharray="1 1"/>
<path d="M23.9 158.4 L27.7 154.6 L31.1 154.6 L28.8 158.4 Z M21.6 161.5 L23.9 161.5 L23.9 165.1 Z M26.4 161.5 L28.6 161.5 Q28.8 164.6 32.8 166.3 Q31.0 169.0 28.4 169.1 Q26.4 168.4 26.4 167.2 Z" fill="#1b9de2" />
<ellipse cx="33.7" cy="161.0" rx="2.6" ry="2.9" fill="#1b9de2" transform="rotate(-25 33.7 161.0)"/>
<path d="M42.3 178 L44.8 175.5 H53.5 V188.6 H42.3 Z" fill="#fff" stroke="#1b9de2" stroke-width="2" stroke-linejoin="round" stroke-linecap="round"/>
<path d="M44.14 179.44 L46.42 177.16 L48.46 177.16 L47.080000000000005 179.44 Z M42.760000000000005 181.29999999999998 L44.14 181.29999999999998 L44.14 183.46 Z M45.64 181.29999999999998 L46.96 181.29999999999998 Q47.080000000000005 183.16 49.480000000000004 184.18 Q48.400000000000006 185.79999999999998 46.84 185.85999999999999 Q45.64 185.44 45.64 184.72 Z" fill="#1b9de2" />
<ellipse cx="50.02" cy="181.0" rx="1.56" ry="1.74" fill="#1b9de2" transform="rotate(-25 50.02 181.0)"/>
<path d="M22.9 197.0 L26.7 193.2 L30.1 193.2 L27.8 197.0 Z M20.6 200.1 L22.9 200.1 L22.9 203.7 Z M25.4 200.1 L27.6 200.1 Q27.8 203.2 31.8 204.9 Q30.0 207.6 27.4 207.7 Q25.4 207.0 25.4 205.79999999999998 Z" fill="#1b9de2" />
<ellipse cx="32.7" cy="199.6" rx="2.6" ry="2.9" fill="#1b9de2" transform="rotate(-25 32.7 199.6)"/>
<rect x="26.2" y="198" width="11.6" height="11.4" fill="#fff"/>
<rect x="27.2" y="200.4" width="9.6" height="8" fill="#fff" stroke="#7a7a7a" stroke-width="1.2"/>
<rect x="27.2" y="199.8" width="9.6" height="2.6" fill="#8a8a8a"/>
<path d="M29.4 198.6 V201 M34.6 198.6 V201" fill="none" stroke="#7a7a7a" stroke-width="1.3" />
<path d="M29.8 205.2 L31.4 206.8 L34.4 203.8" fill="none" stroke="#666" stroke-width="1.1" />
<path d="M41 215.4 L43.6 212.8 H51.6 V224.8 H41 Z" fill="#fff" stroke="#1b9de2" stroke-width="2" stroke-linejoin="round" stroke-linecap="round"/>
<path d="M42.94 216.24 L45.22 213.96 L47.26 213.96 L45.88 216.24 Z M41.56 218.1 L42.94 218.1 L42.94 220.26000000000002 Z M44.44 218.1 L45.76 218.1 Q45.88 219.96 48.28 220.98000000000002 Q47.2 222.6 45.64 222.66 Q44.44 222.24 44.44 221.52 Z" fill="#1b9de2" />
<ellipse cx="48.82" cy="217.8" rx="1.56" ry="1.74" fill="#1b9de2" transform="rotate(-25 48.82 217.8)"/>
<rect x="45.4" y="215.8" width="11.6" height="11.4" fill="#fff"/>
<rect x="46.4" y="218.20000000000002" width="9.6" height="8" fill="#fff" stroke="#7a7a7a" stroke-width="1.2"/>
<rect x="46.4" y="217.60000000000002" width="9.6" height="2.6" fill="#8a8a8a"/>
<path d="M48.6 216.4 V218.8 M53.8 216.4 V218.8" fill="none" stroke="#7a7a7a" stroke-width="1.3" />
<path d="M49.0 223.0 L50.6 224.60000000000002 L53.6 221.60000000000002" fill="none" stroke="#666" stroke-width="1.1" />
<circle cx="46.8" cy="237" r="6.8" fill="#cf1124"/>
<path d="M43.6 233.8 L47.4 237.6 M47.4 233.8 L43.6 237.6" fill="none" stroke="#fff" stroke-width="1.9" />
<rect x="45.4" y="234.4" width="11.6" height="11.4" fill="#fff"/>
<rect x="46.4" y="236.8" width="9.6" height="8" fill="#fff" stroke="#7a7a7a" stroke-width="1.2"/>
<rect x="46.4" y="236.20000000000002" width="9.6" height="2.6" fill="#8a8a8a"/>
<path d="M48.6 235.0 V237.4 M53.8 235.0 V237.4" fill="none" stroke="#7a7a7a" stroke-width="1.3" />
<path d="M49.0 241.6 L50.6 243.20000000000002 L53.6 240.20000000000002" fill="none" stroke="#666" stroke-width="1.1" />
<rect x="247.7" y="98.8" width="13.6" height="12.2" fill="none" stroke="#6e6e6e" stroke-width="1.4"/>
<rect x="247.7" y="98.8" width="13.6" height="2" fill="#6e6e6e"/>
<rect x="249.6" y="99.3" width="1" height="1" fill="#d9dde6"/>
<rect x="251.6" y="99.3" width="1" height="1" fill="#d9dde6"/>
<rect x="253.6" y="99.3" width="1" height="1" fill="#d9dde6"/>
<path d="M261.6 97 L255.4 107.6" fill="none" stroke="#d9dde6" stroke-width="4.6" />
<path d="M261.6 97 L255.6 107.2" fill="none" stroke="#1b9de2" stroke-width="3.1" stroke-linecap="round"/>
<path d="M255.8 106.6 L254.4 109.4 L257 107.6 Z" fill="#1b9de2" stroke="#1b9de2" stroke-width="0.6" />
<rect x="1120.5" y="101.5" width="8" height="8" fill="none" stroke="#666" stroke-width="1"/>
<path d="M1135.2 102 L1142.8 109 M1142.8 102 L1135.2 109" fill="none" stroke="#555" stroke-width="1.4" />
<path d="M246 139 L254 130.6 L262 139 H260 V145.2 H255.9 V141.2 H252.3 V145.2 H248.2 V139 Z M249.6 131.2 h2.2 v2.2 l-2.2 2.2z" fill="#6c6c6c" />
<path d="M331.2 135 L338.8 142.8 M338.8 135 L331.2 142.8" fill="none" stroke="#555" stroke-width="1.2" />
<path d="M548.4 132.8 L556 140.6 M556 132.8 L548.4 140.6" fill="none" stroke="#555" stroke-width="1.2" />
<circle cx="358.6" cy="132" r="4.6" fill="#cf1124"/>
<path d="M356.6 130 L360.6 134 M360.6 130 L356.6 134" fill="none" stroke="#fff" stroke-width="1.5" />
<path d="M366.2 130.6 L370.4 139.8 H362 Z" fill="#ffe000" stroke="#ffe000" stroke-width="1" stroke-linejoin="round" stroke-linecap="round"/>
<path d="M366.2 133.4 V136.6 M366.2 137.6 V138.8" fill="none" stroke="#333" stroke-width="1.2" />
<rect x="355.8" y="137.2" width="6.6" height="6" fill="#13b90d"/>
<path d="M357.2 140.2 L358.8 141.8 L361.2 138.8" fill="none" stroke="#fff" stroke-width="1.1" />
<path d="M256.2 159.6 H264.1 L269.5 165.0 M264.1 159.6 V165.0 H269.5 M256.2 159.6 V177.7 H266 M269.5 165 V166.5" fill="none" stroke="#6e6e6e" stroke-width="1.8" stroke-linejoin="round" stroke-linecap="round"/>
<path d="M264.8 176 Q263.6 167.8 271.2 167.6 V163.6 L277.8 169 L271.2 174.4 V171.2 Q266.4 171 264.8 176 Z" fill="#1b9de2" />
<path d="M430 158.4 H441.6 L447 163.8 M441.6 158.4 V163.8 H447 M430 158.4 V177.7 H435.4 M447 163.8 V166" fill="none" stroke="#6e6e6e" stroke-width="1.8" stroke-linejoin="round" stroke-linecap="round"/>
<rect x="437.8" y="168.6" width="11" height="10.8" fill="#fff" rx="1.2" stroke="#1b9de2" stroke-width="1.8"/>
<path d="M440 172.6 L443.2 176 L452.4 167.4" fill="none" stroke="#fff" stroke-width="5" />
<path d="M440.2 172.6 L443.3 175.9 L452.2 167.6" fill="none" stroke="#1b9de2" stroke-width="2.8" stroke-linejoin="round" stroke-linecap="round"/>
<path d="M562 158.4 H573.6 L579 163.8 M573.6 158.4 V163.8 H579 M562 158.4 V179.4 H566 M579 163.8 V171" fill="none" stroke="#6e6e6e" stroke-width="1.8" stroke-linejoin="round" stroke-linecap="round"/>
<path d="M565 171.4 V166 L567.2 167.6 L569.6 165.2 H571.8 L574 167.6 L576.2 166 V171.4 Z" fill="#ff7f1e" />
<path d="M569 180.4 H580 A3 3 0 0 0 580.4 174.6 A4.4 4.4 0 0 0 572 173.6 A3.6 3.6 0 0 0 569 180.4 Z" fill="#1b9de2" stroke="#fff" stroke-width="1.4" />
<path d="M574.4 179 V176.6 H572.6 L575.2 173.8 L577.8 176.6 H576 V179 Z" fill="#fff" />
<path d="M636.6 165.4 V174.4 Q636.6 175.6 637.8 175.6 H652.8" fill="none" stroke="#757575" stroke-width="2.1" stroke-linejoin="round" stroke-linecap="round"/>
<rect x="639.6" y="161.4" width="16.8" height="11.4" fill="#fff" rx="0.8" stroke="#1b9de2" stroke-width="1.8"/>
<path d="M640 162 L648 168.6 L656 162" fill="none" stroke="#1b9de2" stroke-width="1.8" stroke-linejoin="round" stroke-linecap="round"/>
<rect x="772" y="158" width="12" height="7" fill="#fff" stroke="#1b9de2" stroke-width="2"/>
<rect x="768.1" y="165" width="19.8" height="10.8" fill="#fff" rx="1.2" stroke="#6e6e6e" stroke-width="2"/>
<rect x="767.1" y="164" width="21.8" height="4.6" fill="#6e6e6e" rx="1.2"/>
<rect x="785.2" y="165.8" width="1.6" height="1.5" fill="#fff"/>
<rect x="772" y="173" width="12" height="6.9" fill="#fff" stroke="#1b9de2" stroke-width="2"/>
<path d="M276.4 445.7 A8.2 8.2 0 1 0 282.2 459.7 L276.4 453.9 Z" fill="#24292e" />
<path d="M277.7 444.4 A8.2 8.2 0 0 1 285.9 452.6 H277.7 Z" fill="#24292e" />
<path d="M278.8 454.7 H286 A8.2 8.2 0 0 1 283.8 459.7 Z" fill="#24292e" />
<circle cx="435" cy="454" r="8" fill="#cf1124"/>
<path d="M431.9 450.9 L438.1 457.1 M438.1 450.9 L431.9 457.1" fill="none" stroke="#fff" stroke-width="2.8" />
<path d="M578 446.8 L585.9 461.2 H570.1 Z" fill="#ffe000" stroke="#ffe000" stroke-width="1.4" stroke-linejoin="round" stroke-linecap="round"/>
<path d="M578 451.6 V456.6 M578 457.6 V459.2" fill="none" stroke="#5b6378" stroke-width="1.9" />
<circle cx="736.9" cy="454" r="8" fill="#13b90d"/>
<path d="M732.5 454.2 L736.1 457.4 L741.5 451.8" fill="none" stroke="#fff" stroke-width="2.4" />
<circle cx="886" cy="454" r="7.4" fill="none" stroke="#8c8c8c" stroke-width="1.2"/>
<text x="886" y="458.5" font-family="Liberation Sans, sans-serif" font-size="12.5" font-weight="700" fill="#8c8c8c" text-anchor="middle">?</text>
<circle cx="276" cy="518" r="6.1" fill="#13b90d"/>
<path d="M272.832 518.144 L275.424 520.448 L279.312 516.416" fill="none" stroke="#fff" stroke-width="1.9" />
<path d="M276 538.64 L282.32 550.16 H269.68 Z" fill="#ffe000" stroke="#ffe000" stroke-width="1.1199999999999999" stroke-linejoin="round" stroke-linecap="round"/>
<path d="M276 542.48 V546.48 M276 547.28 V548.56" fill="none" stroke="#5b6378" stroke-width="1.52" />
<circle cx="276" cy="571" r="6.1" fill="#13b90d"/>
<path d="M272.832 571.144 L275.424 573.448 L279.312 569.416" fill="none" stroke="#fff" stroke-width="1.9" />
<circle cx="276" cy="597" r="6.1" fill="#13b90d"/>
<path d="M272.832 597.144 L275.424 599.448 L279.312 595.416" fill="none" stroke="#fff" stroke-width="1.9" />
<path d="M276 617.64 L282.32 629.16 H269.68 Z" fill="#ffe000" stroke="#ffe000" stroke-width="1.1199999999999999" stroke-linejoin="round" stroke-linecap="round"/>
<path d="M276 621.48 V625.48 M276 626.28 V627.56" fill="none" stroke="#5b6378" stroke-width="1.52" />
<circle cx="276" cy="650" r="6.1" fill="#13b90d"/>
<path d="M272.832 650.144 L275.424 652.448 L279.312 648.416" fill="none" stroke="#fff" stroke-width="1.9" />
<circle cx="276" cy="677" r="6.1" fill="#13b90d"/>
<path d="M272.832 677.144 L275.424 679.448 L279.312 675.416" fill="none" stroke="#fff" stroke-width="1.9" />
<circle cx="276" cy="703" r="6.1" fill="#cf1124"/>
<path d="M273.7 700.7 L278.3 705.3 M278.3 700.7 L273.7 705.3" fill="none" stroke="#fff" stroke-width="2.1" />
</svg>
</body></html>
